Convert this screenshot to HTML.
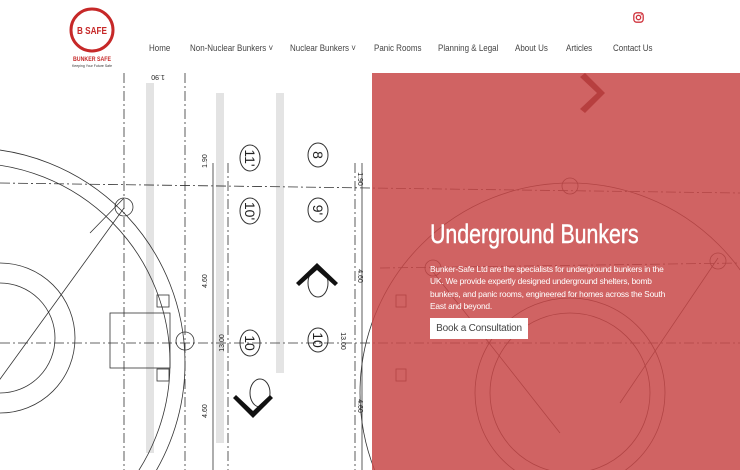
<!DOCTYPE html>
<html><head><meta charset="utf-8"><style>
*{margin:0;padding:0;box-sizing:border-box}
html,body{width:740px;height:470px;overflow:hidden}
body{background:#fff;font-family:"Liberation Sans",sans-serif;position:relative}
.hdr{position:absolute;left:0;top:0;width:740px;height:73px;background:#fff;z-index:5}
.nav{position:absolute;top:43px;font-size:9.5px;color:#444;transform:scaleX(0.84);transform-origin:left top;white-space:nowrap}
.hero{position:absolute;left:0;top:73px;width:740px;height:397px;background:#fff;overflow:hidden}
.red{position:absolute;left:372px;top:0;width:368px;height:397px;background:rgba(200,72,72,0.85)}
h1{position:absolute;left:430px;top:219px;color:#fff;font-size:27px;font-weight:normal;transform:scaleX(0.79);transform-origin:left top;z-index:3;white-space:nowrap;-webkit-text-stroke:0.4px #fff}
p{position:absolute;left:430px;top:263px;width:236px;color:#fff;font-size:8.4px;line-height:12.4px;z-index:3;letter-spacing:-0.2px}
.btn{position:absolute;left:430px;top:318px;width:98px;height:21px;background:#fff;color:#444;font-size:10px;line-height:21px;text-align:center;z-index:3;letter-spacing:-0.2px}
</style></head><body>
<div class="hdr">
<svg width="50" height="66" style="position:absolute;left:68px;top:6px" viewBox="0 0 50 66">
<circle cx="24" cy="24" r="21" fill="none" stroke="#c62828" stroke-width="3"/>
<text x="24" y="28" text-anchor="middle" font-family="Liberation Sans" font-weight="bold" font-size="10" fill="#c62828" textLength="30" lengthAdjust="spacingAndGlyphs">B SAFE</text>
<text x="24" y="55" text-anchor="middle" font-family="Liberation Sans" font-weight="bold" font-size="6.5" fill="#c62828" textLength="38" lengthAdjust="spacingAndGlyphs">BUNKER SAFE</text>
<text x="24" y="61" text-anchor="middle" font-family="Liberation Sans" font-size="3.5" fill="#333">Keeping Your Future Safe</text>
</svg>
<span class="nav" style="left:149px">Home</span>
<span class="nav" style="left:190px">Non-Nuclear Bunkers ˅</span>
<span class="nav" style="left:290px">Nuclear Bunkers ˅</span>
<span class="nav" style="left:374px">Panic Rooms</span>
<span class="nav" style="left:438px">Planning &amp; Legal</span>
<span class="nav" style="left:515px">About Us</span>
<span class="nav" style="left:566px">Articles</span>
<span class="nav" style="left:613px">Contact Us</span>
<svg width="11" height="11" style="position:absolute;left:633px;top:12px" viewBox="0 0 11 11"><rect x="0.8" y="0.8" width="9.4" height="9.4" rx="2.8" fill="none" stroke="#d0343e" stroke-width="1.3"/><circle cx="5.5" cy="5.5" r="2.2" fill="none" stroke="#d0343e" stroke-width="1.3"/><circle cx="8.3" cy="2.7" r="0.6" fill="#d0343e"/></svg>
</div>
<div class="hero">
<svg width="740" height="397" style="position:absolute;left:0;top:0" fill="none" stroke="#333" stroke-width="0.8">
<g stroke="#ddd" stroke-width="8" opacity="0.8"><line x1="150" y1="10" x2="150" y2="380"/><line x1="220" y1="20" x2="220" y2="370"/><line x1="280" y1="20" x2="280" y2="300"/></g>
<circle cx="-30" cy="290" r="215"/><circle cx="-30" cy="290" r="200"/>
<circle cx="0" cy="265" r="75"/><circle cx="0" cy="265" r="55"/>
<circle cx="570" cy="320" r="210"/><circle cx="570" cy="320" r="95"/><circle cx="570" cy="320" r="80"/>
<g stroke-dasharray="10 3 2 3"><line x1="124" y1="0" x2="124" y2="397"/><line x1="185" y1="0" x2="185" y2="397"/><line x1="228" y1="90" x2="228" y2="397"/><line x1="355" y1="90" x2="355" y2="397"/><line x1="0" y1="110" x2="740" y2="120"/><line x1="0" y1="270" x2="740" y2="270"/><line x1="380" y1="195" x2="740" y2="190"/></g>
<line x1="213" y1="90" x2="213" y2="397"/><line x1="362" y1="90" x2="362" y2="397"/>
<line x1="90" y1="160" x2="124" y2="125"/><line x1="124" y1="135" x2="-10" y2="320"/><line x1="430" y1="195" x2="560" y2="360"/><line x1="718" y1="185" x2="620" y2="330"/>
<circle cx="124" cy="134" r="9"/><circle cx="185" cy="268" r="9"/><circle cx="433" cy="195" r="8"/><circle cx="718" cy="188" r="8"/><circle cx="570" cy="113" r="8"/>
<g stroke-width="1"><ellipse cx="250" cy="85" rx="10" ry="13"/><ellipse cx="250" cy="138" rx="10" ry="13"/><ellipse cx="250" cy="270" rx="10" ry="13"/><ellipse cx="318" cy="82" rx="10" ry="12"/><ellipse cx="318" cy="137" rx="10" ry="12"/><ellipse cx="318" cy="267" rx="10" ry="12"/><ellipse cx="260" cy="320" rx="10" ry="14"/><ellipse cx="318" cy="210" rx="10" ry="14"/></g>
<g font-family="Liberation Sans" font-size="14" fill="#222" stroke="none" text-anchor="middle"><text x="250" y="90" transform="rotate(90 250 85)">11'</text><text x="250" y="143" transform="rotate(90 250 138)">10'</text><text x="250" y="275" transform="rotate(90 250 270)">10</text><text x="318" y="87" transform="rotate(90 318 82)">8</text><text x="318" y="142" transform="rotate(90 318 137)">9'</text><text x="318" y="272" transform="rotate(90 318 267)">10</text>
<text x="205" y="90" font-size="7" transform="rotate(-90 205 88)">1.90</text><text x="205" y="210" font-size="7" transform="rotate(-90 205 208)">4.60</text><text x="222" y="272" font-size="7" transform="rotate(-90 222 270)">13.00</text><text x="205" y="340" font-size="7" transform="rotate(-90 205 338)">4.60</text><text x="158" y="8" font-size="7" transform="rotate(180 158 5)">1.90</text>
<text x="360" y="108" font-size="7" transform="rotate(90 360 106)">1.90</text><text x="360" y="205" font-size="7" transform="rotate(90 360 203)">4.60</text><text x="343" y="270" font-size="7" transform="rotate(90 343 268)">13.00</text><text x="360" y="335" font-size="7" transform="rotate(90 360 333)">4.60</text></g>
<g fill="#111" stroke="none"><polygon points="233,325 253,345 273,325 270,322 253,338 236,322"/><polygon points="296,210 317,190 338,210 335,213 317,197 299,213"/></g>
<polygon points="585,0 605,20 585,40 580,36 597,20 580,4" fill="#5a1010" stroke="none"/>
<rect x="157" y="222" width="12" height="12"/><rect x="157" y="296" width="12" height="12"/><rect x="396" y="222" width="10" height="12"/><rect x="396" y="296" width="10" height="12"/><rect x="110" y="240" width="60" height="55"/>
</svg>
<div class="red"></div>
</div>
<h1>Underground Bunkers</h1>
<p>Bunker-Safe Ltd are the specialists for underground bunkers in the UK. We provide expertly designed underground shelters, bomb bunkers, and panic rooms, engineered for homes across the South East and beyond.</p>
<div class="btn">Book a Consultation</div>
</body></html>
